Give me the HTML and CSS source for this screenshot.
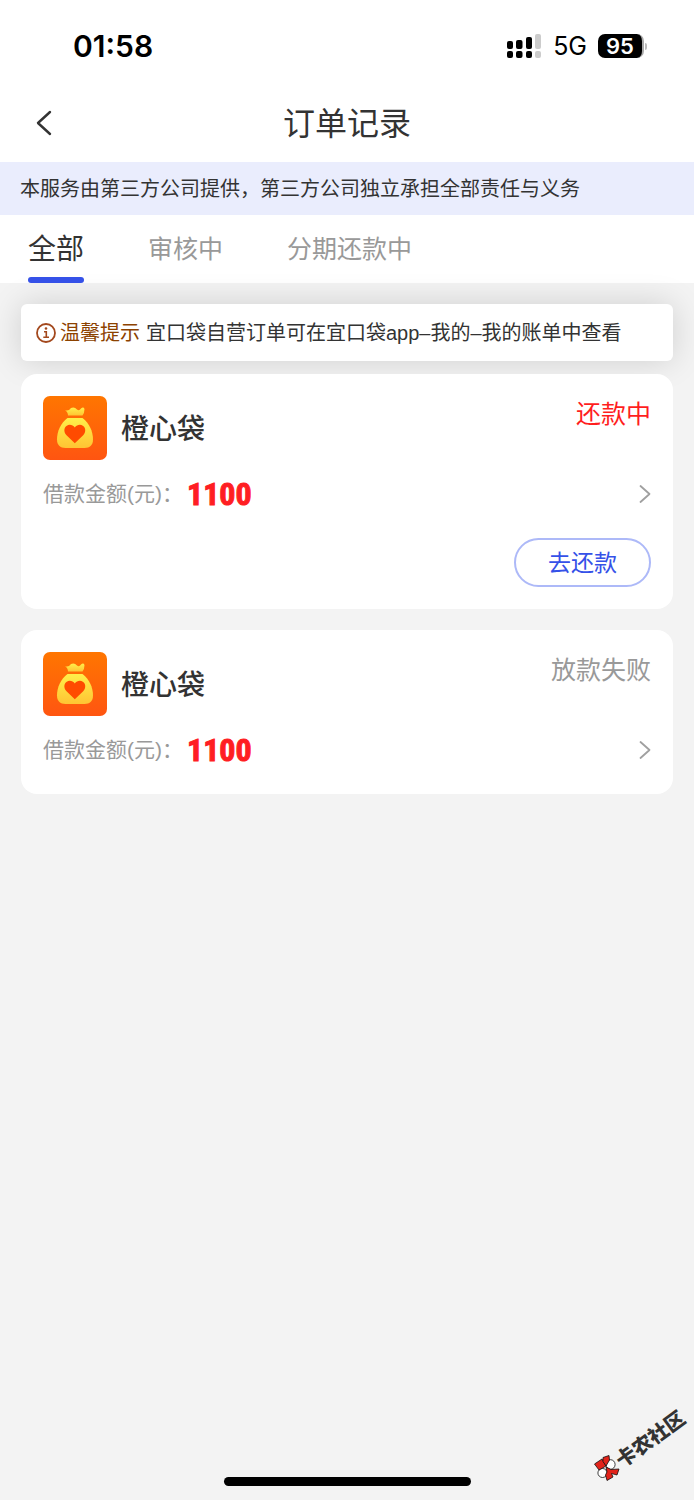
FILE: index.html
```
<!DOCTYPE html>
<html lang="zh-CN">
<head>
<meta charset="utf-8">
<meta name="viewport" content="width=device-width, initial-scale=1">
<title>订单记录</title>
<link rel="stylesheet" href="styles.css">
</head>
<body>
<svg class="defs" width="0" height="0" aria-hidden="true">
  <defs>
    <linearGradient id="tile" x1="0" y1="0" x2="0" y2="1"><stop offset="0" stop-color="#ff7600"/><stop offset="1" stop-color="#ff5511"/></linearGradient>
    <linearGradient id="gold" x1="0" y1="0" x2="0" y2="1"><stop offset="0" stop-color="#ffef4a"/><stop offset="1" stop-color="#ffc433"/></linearGradient>
    <symbol id="bag" viewBox="0 0 64 64">
      <rect width="64" height="64" rx="7" fill="url(#tile)"/>
      <path d="M22 14.200Q25.500 15.500 28 12Q31.500 10.500 34 13.500Q36 15.500 38 12.500Q40.500 10.500 41.500 13Q41.500 17 39.500 19.500H25Q25 16 22 14.200Z" fill="url(#gold)"/>
      <path d="M24.500 22H39.500C46 27 50 35 50 43.500C50 49 47 52 41.500 52H22.500C17 52 14 49 14 43.500C14 35 18 27 24.500 22Z" fill="url(#gold)"/>
      <path d="M31.800 47.300L23.500 39.200C20.500 36.100 20.800 31.500 23.800 29.700C26.500 28 30 29 31.800 31.600C33.600 29 37.100 28 39.800 29.700C42.800 31.500 43.200 36.100 40.200 39.200Z" fill="#ff4b00"/>
    </symbol>
    <symbol id="next" viewBox="0 0 12 20"><path d="M1.500 2L10.500 10L1.500 18" fill="none" stroke="#a0a0a0" stroke-width="1.800" stroke-linecap="round" stroke-linejoin="round"/></symbol>
  </defs>
</svg>
<div class="app">
  <div class="statusbar">
    <span class="time">01:58</span>
    <div class="indicators">
      <svg class="signal" width="35" height="24" viewBox="0 0 35 24" aria-hidden="true">
        <g fill="#000"><rect x="0" y="7" width="6" height="8" rx="2"/><rect x="9" y="6" width="6.500" height="9" rx="2"/><rect x="19" y="3" width="6" height="12" rx="2"/><rect x="0" y="17" width="6" height="7" rx="2"/><rect x="9" y="17" width="6.500" height="7" rx="2"/><rect x="19" y="17" width="6" height="7" rx="2"/></g>
        <g fill="#ccc"><rect x="28" y="0" width="6" height="15" rx="2"/><rect x="28" y="17" width="6" height="7" rx="2"/></g>
      </svg>
      <span class="network">5G</span>
      <span class="battery">95</span>
    </div>
  </div>
  <header class="nav">
    <button class="back" type="button" aria-label="返回"><svg width="16" height="26" viewBox="0 0 16 26"><path d="M14 2L2 13L14 24" fill="none" stroke="#333" stroke-width="2.400" stroke-linecap="round" stroke-linejoin="round"/></svg></button>
    <h1 class="title">订单记录</h1>
  </header>
  <p class="notice">本服务由第三方公司提供，第三方公司独立承担全部责任与义务</p>
  <nav class="tabs">
    <button class="tab tab-active" type="button">全部</button>
    <button class="tab" type="button">审核中</button>
    <button class="tab" type="button">分期还款中</button>
  </nav>
  <main class="content">
    <p class="tip">
      <svg class="info" width="20" height="20" viewBox="0 0 20 20" aria-hidden="true"><circle cx="10" cy="10" r="9" fill="none" stroke="#a3481d" stroke-width="1.800"/><path d="M8 8.700H10.300V14M7.300 14.200H13" fill="none" stroke="#a3481d" stroke-width="1.600"/><circle cx="10" cy="5.500" r="1.300" fill="#a3481d"/></svg>
      <strong class="tip-label">温馨提示</strong>
      <span class="tip-text">宜口袋自营订单可在宜口袋app–我的–我的账单中查看</span>
    </p>
    <article class="card">
      <div class="card-head">
        <svg class="logo" aria-hidden="true"><use href="#bag"/></svg>
        <h2 class="name">橙心袋</h2>
        <span class="state state-due">还款中</span>
      </div>
      <div class="card-row">
        <span class="label">借款金额(元)：</span>
        <span class="amount">1100</span>
        <svg class="arrow" aria-hidden="true"><use href="#next"/></svg>
      </div>
      <div class="actions"><button class="repay" type="button">去还款</button></div>
    </article>
    <article class="card">
      <div class="card-head">
        <svg class="logo" aria-hidden="true"><use href="#bag"/></svg>
        <h2 class="name">橙心袋</h2>
        <span class="state">放款失败</span>
      </div>
      <div class="card-row">
        <span class="label">借款金额(元)：</span>
        <span class="amount">1100</span>
        <svg class="arrow" aria-hidden="true"><use href="#next"/></svg>
      </div>
    </article>
  </main>
  <footer class="home"><span class="home-bar"></span></footer>
  <div class="watermark">
    <svg width="26" height="26" viewBox="0 0 26 26" aria-hidden="true">
      <g stroke="#111" stroke-width="0.800" stroke-linejoin="round"><g fill="#fff"><ellipse cx="16.500" cy="9.500" rx="4.600" ry="4.800"/><ellipse cx="8.500" cy="18" rx="4.600" ry="4.500"/></g><g fill="#e2231a"><path d="M0.500 9L8 4L12 11L5 15Z"/><path d="M9 2.500L15 0.500L15.500 5L12 11L9 6.500Z"/><path d="M12 12L17 14.500L25 14L23 20L17.500 18.500L19 22L13 25.500L11.500 20L13 17Z"/></g></g>
    </svg>
    <span class="watermark-text">卡农社区</span>
  </div>
</div>
</body>
</html>
```

FILE: styles.css
```
* { box-sizing: border-box; }
body, h1, h2, p { margin: 0; }
body {
  background: #f3f3f3;
  color: #333;
  font-family: "Liberation Sans", "Noto Sans CJK SC", sans-serif;
}
button {
  padding: 0;
  border: 0;
  background: none;
  color: inherit;
  font-family: inherit;
}
svg { flex: none; }
.defs { position: absolute; }
.app {
  position: relative;
  display: flex;
  flex-direction: column;
  min-height: 100vh;
}
.statusbar {
  display: flex;
  align-items: center;
  justify-content: space-between;
  height: 84px;
  padding: 8px 50px 0 73px;
  background: #fff;
  color: #000;
  font-family: Inter, sans-serif;
}
.time { font-size: 30px; font-weight: 600; }
.indicators { display: flex; align-items: center; }
.network { margin: 0 11px; font-size: 25px; }
.battery {
  position: relative;
  width: 46px;
  height: 24px;
  border-right: 2px solid #aaa;
  border-radius: 7px;
  background: #000;
  color: #fff;
  font-size: 22px;
  font-weight: 600;
  line-height: 24px;
  text-align: center;
}
.battery::after {
  position: absolute;
  top: 9px;
  right: -5px;
  width: 2px;
  height: 7px;
  border-radius: 0 2px 2px 0;
  background: #bbb;
  content: "";
}
.nav {
  display: grid;
  grid-template-columns: 64px 1fr 64px;
  align-items: center;
  height: 78px;
  background: #fff;
}
.back { display: flex; padding-left: 36px; }
.title {
  grid-column: 2;
  padding-top: 2px;
  font-size: 32px;
  font-weight: 400;
  line-height: 48px;
  text-align: center;
}
.notice {
  padding: 13px 20px 12px;
  background: #eaedfd;
  font-size: 20px;
  line-height: 28px;
}
.tabs {
  display: flex;
  gap: 64px;
  height: 68px;
  padding: 0 28px;
  background: #fff;
}
.tab {
  padding-top: 2px;
  border-bottom: 6px solid transparent;
  color: #999;
  font-size: 25px;
}
.tab-active {
  position: relative;
  color: #333;
  font-size: 28px;
}
.tab-active::after {
  position: absolute;
  right: 0;
  bottom: -6px;
  left: 0;
  height: 6px;
  border-radius: 3px;
  background: #3551e8;
  content: "";
}
.content { padding: 21px; }
.tip {
  display: flex;
  align-items: center;
  min-height: 57px;
  margin-bottom: 13px;
  padding: 0 15px;
  border-radius: 6px;
  background: #fff;
  box-shadow: 0 0 32px rgba(0, 0, 0, 0.15);
  font-size: 20px;
  line-height: 28px;
}
.tip-label {
  margin: 0 6px 0 4px;
  color: #8c4200;
  font-weight: 400;
}
.card {
  position: relative;
  margin-bottom: 21px;
  padding: 22px;
  border-radius: 16px;
  background: #fff;
}
.card-head { display: flex; align-items: center; gap: 14px; }
.logo { width: 64px; height: 64px; }
.name {
  padding-top: 4px;
  font-size: 28px;
  font-weight: 500;
  line-height: 40px;
}
.state {
  align-self: flex-start;
  margin-left: auto;
  color: #999;
  font-size: 25px;
  line-height: 36px;
}
.state-due { color: #ff1e1e; }
.card-row {
  display: flex;
  align-items: center;
  height: 44px;
  margin-top: 12px;
}
.label { padding-bottom: 4px; color: #999; font-size: 21px; }
.amount {
  margin-left: 4px;
  color: #ff1e23;
  font-family: "Liberation Sans Narrow", "Roboto Condensed", Roboto, sans-serif;
  font-size: 32px;
  font-weight: 700;
  line-height: 44px;
  -webkit-text-stroke: 1px #ff1e23;
}
.arrow { width: 12px; height: 20px; margin-left: auto; }
.actions { display: flex; justify-content: flex-end; margin-top: 22px; }
.repay {
  width: 137px;
  height: 49px;
  padding-bottom: 4px;
  border: 2px solid #adb9f8;
  border-radius: 25px;
  color: #3551e8;
  font-size: 23px;
}
.home {
  display: flex;
  justify-content: center;
  margin-top: auto;
  padding-bottom: 14px;
}
.home-bar { width: 247px; height: 9px; border-radius: 5px; background: #000; }
.watermark {
  position: absolute;
  right: 0;
  bottom: 19px;
  display: flex;
  align-items: flex-end;
  width: 100px;
  height: 74px;
}
.watermark-text {
  position: absolute;
  bottom: 10px;
  left: 30px;
  color: #333;
  font-size: 20px;
  font-weight: 900;
  line-height: 20px;
  white-space: nowrap;
  transform: rotate(-36deg);
  transform-origin: left bottom;
}
```
